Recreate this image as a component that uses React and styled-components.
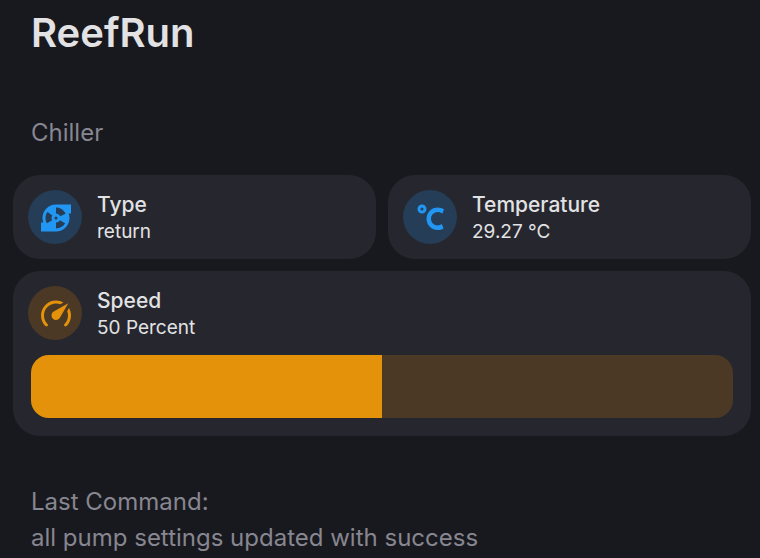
import styled, { createGlobalStyle } from "styled-components";

const GlobalStyle = createGlobalStyle`
  * {
    box-sizing: border-box;
  }

  body {
    margin: 0;
    background-color: #18191e;
    color: #e2e2e4;
    font-family: Inter, "Liberation Sans", sans-serif;
  }
`;

const Page = styled.main`
  padding: 8px 9px 0 13px;
`;

const Title = styled.h1`
  margin: 0;
  padding: 0 18px;
  font-size: 40px;
  font-weight: 600;
  line-height: 50px;
`;

const Note = styled.p`
  margin: 0;
  padding: 0 18px;
  color: #878691;
  font-size: 24px;
  line-height: 36px;
`;

const SectionTitle = styled(Note).attrs({ as: "h2" })`
  margin: 57px 0 24px;
  font-weight: 400;
`;

const Grid = styled.div`
  display: grid;
  grid-template-columns: 1fr 1fr;
  gap: 12px;
  margin-bottom: 48px;
`;

const Card = styled.section`
  grid-column: ${(props) => (props.$wide ? "1 / -1" : "auto")};
  padding-bottom: ${(props) => (props.$wide ? "18px" : "0")};
  border-radius: 27px;
  background-color: #26272e;
`;

const Row = styled.div`
  display: flex;
  align-items: center;
  gap: 15px;
  padding: 15px;
`;

const Badge = styled.div`
  display: flex;
  align-items: center;
  justify-content: center;
  flex-shrink: 0;
  width: 54px;
  height: 54px;
  padding: 2px 0 0 2px;
  border-radius: 50%;
  color: ${(props) => props.$color};
  background-color: ${(props) => props.$background};
`;

const Icon = styled.svg`
  width: 36px;
  height: 36px;
  fill: currentColor;
`;

const Name = styled.h3`
  margin: 0;
  font-size: 21px;
  font-weight: 500;
  line-height: 30px;
`;

const Value = styled.p`
  margin: 0;
  font-size: 19px;
  line-height: 24px;
`;

const Track = styled.div`
  height: 63px;
  margin: 0 18px;
  overflow: hidden;
  border-radius: 18px;
  background-color: #4b3926;
`;

const Fill = styled.div`
  height: 100%;
  background-color: #e5920b;
`;

const colors = {
  blue: { $color: "#2196f3", $background: "#253d56" },
  orange: { $color: "#e5920b", $background: "#4b3926" },
};

const icons = {
  pump: "M2 21V15H3.5C3.18 14.06 3 13.05 3 12C3 7.03 7.03 3 12 3H22V9H20.5C20.82 9.94 21 10.95 21 12C21 16.97 16.97 21 12 21H2M5 12C5 13.28 5.34 14.47 5.94 15.5L9.4 13.5C9.15 13.06 9 12.55 9 12C9 11.35 9.21 10.75 9.56 10.26L6.3 7.93C5.5 9.08 5 10.5 5 12M12 19C14.59 19 16.85 17.59 18.06 15.5L14.6 13.5C14.08 14.4 13.11 15 12 15V19M12 9C13.21 9 14.26 9.72 14.73 10.76L18.37 9.1C17.27 6.68 14.83 5 12 5V9M12 11A1 1 0 0 0 11 12A1 1 0 0 0 12 13A1 1 0 0 0 13 12A1 1 0 0 0 12 11Z",
  celsius:
    "M16.5,5C18.05,5 19.5,5.47 20.69,6.28L19.53,9.17C18.73,8.44 17.67,8 16.5,8C14,8 12,10 12,12.5C12,15 14,17 16.5,17C17.53,17 18.47,16.66 19.23,16.08L20.37,18.93C19.24,19.61 17.92,20 16.5,20A7.5,7.5 0 0,1 9,12.5A7.5,7.5 0 0,1 16.5,5M6,3A3,3 0 0,1 9,6A3,3 0 0,1 6,9A3,3 0 0,1 3,6A3,3 0 0,1 6,3M6,5A1,1 0 0,0 5,6A1,1 0 0,0 6,7A1,1 0 0,0 7,6A1,1 0 0,0 6,5Z",
  speedometer:
    "M12,16A3,3 0 0,1 9,13C9,11.88 9.61,10.9 10.5,10.39L20.21,4.77L14.68,14.35C14.18,15.33 13.17,16 12,16M12,3C13.81,3 15.5,3.5 16.97,4.32L14.87,5.53C14,5.19 13,5 12,5A8,8 0 0,0 4,13C4,15.21 4.89,17.21 6.34,18.65H6.35C6.74,19.04 6.74,19.67 6.35,20.06C5.96,20.45 5.32,20.45 4.93,20.07C3.12,18.26 2,15.76 2,13A10,10 0 0,1 12,3M22,13C22,15.76 20.88,18.26 19.07,20.07C18.68,20.45 18.05,20.45 17.66,20.06C17.27,19.67 17.27,19.04 17.66,18.65C19.11,17.2 20,15.21 20,13C20,12 19.81,11 19.46,10.1L20.67,8C21.5,9.5 22,11.18 22,13Z",
};

function Entity({ icon, color, name, value }) {
  return (
    <Row>
      <Badge {...colors[color]}>
        <Icon viewBox="0 0 24 24" aria-hidden="true">
          <path d={icons[icon]} fillRule="evenodd" />
        </Icon>
      </Badge>
      <div>
        <Name>{name}</Name>
        <Value>{value}</Value>
      </div>
    </Row>
  );
}

function App() {
  const speed = 50;

  return (
    <>
      <GlobalStyle />
      <Page>
        <Title>ReefRun</Title>
        <SectionTitle>Chiller</SectionTitle>
        <Grid>
          <Card>
            <Entity icon="pump" color="blue" name="Type" value="return" />
          </Card>
          <Card>
            <Entity
              icon="celsius"
              color="blue"
              name="Temperature"
              value="29.27 °C"
            />
          </Card>
          <Card $wide>
            <Entity
              icon="speedometer"
              color="orange"
              name="Speed"
              value={`${speed} Percent`}
            />
            <Track
              role="progressbar"
              aria-label="Speed"
              aria-valuemin={0}
              aria-valuemax={100}
              aria-valuenow={speed}
            >
              <Fill style={{ width: `${speed}%` }} />
            </Track>
          </Card>
        </Grid>
        <Note>Last Command:</Note>
        <Note>all pump settings updated with success</Note>
      </Page>
    </>
  );
}

export default App;
